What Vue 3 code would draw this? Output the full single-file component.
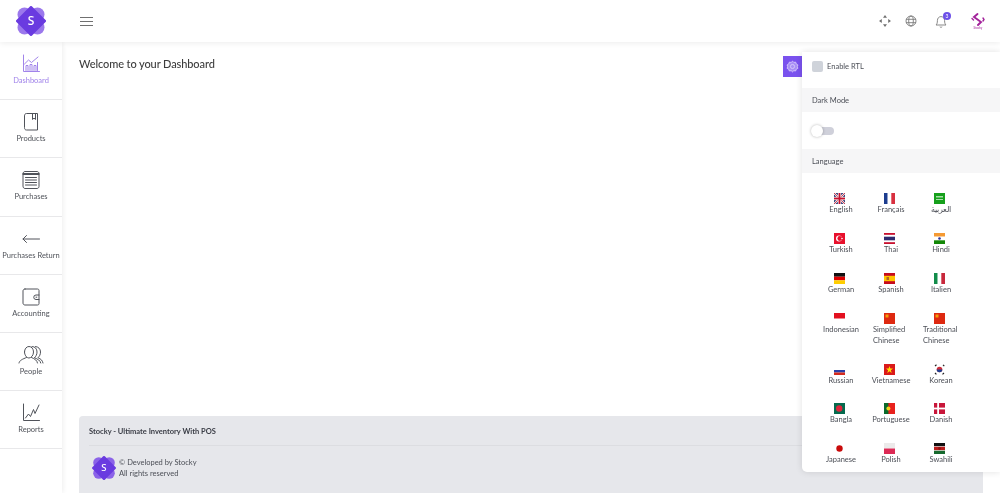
<template>
  <div class="app-shell">
    <header class="topbar">
      <div class="brand">
        <svg width="30" height="30" viewBox="0 0 30 30">
          <g fill="#9b78ec">
            <circle cx="8.500" cy="8.500" r="7" />
            <circle cx="21.500" cy="8.500" r="7" />
            <circle cx="8.500" cy="21.500" r="7" />
            <circle cx="21.500" cy="21.500" r="7" />
          </g>
          <path d="M15 1.500 L28.500 15 L15 28.500 L1.500 15 Z" fill="#6a3be0" stroke="#6a3be0" stroke-width="3" stroke-linejoin="round" />
          <text x="15" y="19" text-anchor="middle" class="logo-s">S</text>
        </svg>
      </div>
      <button class="burger"><span></span><span></span><span></span></button>
      <div class="top-actions">
        <svg width="14" height="14" viewBox="0 0 14 14" fill="#707070">
          <path d="M7 1 9 3.800H5zM7 13 5 10.200h4zM1 7l2.800-2v4zM13 7l-2.800 2V5z" />
        </svg>
        <svg width="14" height="14" viewBox="0 0 14 14" fill="none" stroke="#7a7a7a" stroke-width=".9">
          <circle cx="7" cy="7" r="5" />
          <ellipse cx="7" cy="7" rx="2.300" ry="5" />
          <path d="M2 5.300h10M2 8.700h10" />
        </svg>
        <div class="bell">
          <svg width="14" height="16" viewBox="0 0 14 16" fill="none" stroke="#7a7a7a" stroke-width=".9">
            <path d="M2 12c1-1 1.400-2 1.400-4.400C3.400 5.200 5 3.600 7 3.600s3.600 1.600 3.600 4c0 2.400.4 3.400 1.400 4.400zM5.800 13.800c.6.600 1.800.600 2.400 0" />
          </svg>
          <span class="badge">3</span>
        </div>
        <div class="avatar">
          <svg width="14" height="13" viewBox="0 0 14 13" fill="none" stroke="#a3239b" stroke-width="1.900" stroke-linecap="round">
            <path d="M6.500 1 3 4l3.500 2.500L10 9l-3 3" />
            <path d="M1 5.500 2.500 7M12 5l1 1.500-1 1.500" stroke-width="1.400" />
          </svg>
          <span class="avatar-name">Stocky</span>
        </div>
      </div>
    </header>

    <div class="layout">
      <nav class="sidebar">
        <a v-for="item in navItems" :key="item.label" class="nav-item" :class="{ active: item.active }">
          <svg width="20" height="20" viewBox="0 0 20 20" fill="none" stroke="currentColor" stroke-width="1" stroke-linecap="round" stroke-linejoin="round">
            <path v-for="d in item.paths" :key="d" :d="d" />
          </svg>
          <span>{{ item.label }}</span>
        </a>
      </nav>

      <main class="content">
        <h1>Welcome to your Dashboard</h1>
        <footer class="page-footer">
          <div class="footer-title">Stocky - Ultimate Inventory With POS</div>
          <div class="footer-row">
            <svg width="24" height="24" viewBox="0 0 30 30">
              <g fill="#8b63e8">
                <circle cx="8.500" cy="8.500" r="7" />
                <circle cx="21.500" cy="8.500" r="7" />
                <circle cx="8.500" cy="21.500" r="7" />
                <circle cx="21.500" cy="21.500" r="7" />
              </g>
              <path d="M15 1.500 L28.500 15 L15 28.500 L1.500 15 Z" fill="#6a3be0" stroke="#6a3be0" stroke-width="3" stroke-linejoin="round" />
              <text x="15" y="19" text-anchor="middle" class="logo-s">S</text>
            </svg>
            <div class="copyright">
              <div>© Developed by Stocky</div>
              <div>All rights reserved</div>
            </div>
          </div>
        </footer>
      </main>
    </div>

    <div class="customizer">
      <button class="gear">
        <svg width="13" height="13" viewBox="0 0 14 14" fill="#a88ff5" stroke="#d6c8fb" stroke-width="1">
          <path d="M7 1.200 8.400 2.600 10.400 2.300 11 4.200 12.800 5.300 12.200 7.200 12.800 9 11 10 10.400 11.800 8.400 11.500 7 12.800 5.600 11.500 3.600 11.800 3 10 1.200 9 1.800 7.200 1.200 5.300 3 4.200 3.600 2.300 5.600 2.600Z" stroke-linejoin="round" />
          <circle cx="7" cy="7" r="2.200" />
        </svg>
      </button>
      <div class="panel">
        <label class="rtl-row"><span class="check"></span>Enable RTL</label>
        <div class="section-title">Dark Mode</div>
        <div class="toggle-row">
          <span class="toggle"><span class="knob"></span></span>
        </div>
        <div class="section-title">Language</div>
        <div class="languages">
          <div v-for="lang in languages" :key="lang.name" class="language">
            <svg width="11" height="11" viewBox="0 0 11 11">
              <component :is="s[0]" v-for="(s, i) in lang.flag" :key="i" v-bind="s[1]" />
            </svg>
            <span>{{ lang.name }}</span>
          </div>
        </div>
      </div>
    </div>
  </div>
</template>

<script setup>
const navItems = [
  { label: 'Dashboard', active: true, paths: ['M2.500 1v16.500h16', 'M5 16.500v-5h2v5M9 16.500v-6h2v6M13 16.500v-5h2v5M16.500 16.500v-8', 'M3.500 10 7.500 6l3 2.500L17 3'] },
  { label: 'Products', paths: ['M3.500 3.500c0-1 .7-2 2-2h11v16.500h-11c-1.300 0-2-.8-2-2z', 'M11.500 1.500v6l1.500-1.400 1.500 1.400v-6'] },
  { label: 'Purchases', paths: ['M2 3.500c0-1 .8-2 2-2h12c1.200 0 2 1 2 2v13c0 1-.8 2-2 2H4c-1.200 0-2-1-2-2z', 'M2 3.500h16M2 4.500h16', 'M4.500 7.500h11M4.500 10h11M4.500 12.500h11M4.500 15h11'] },
  { label: 'Purchases Return', paths: ['M2 10h16.500', 'M5.500 6.500 2 10l3.500 3.500'] },
  { label: 'Accounting', paths: ['M4 2h12.500c1 0 1.500.7 1.500 1.500v13c0 1-.6 1.500-1.500 1.500H4c-1.200 0-2-.8-2-2V4c0-1.200.8-2 2-2z', 'M18 8h-3a2.200 2.200 0 0 0 0 4.500h3', 'M15 10.200h.8'] },
  { label: 'People', paths: ['M3.500 7c0-3.200 2-5.500 4.500-5.500s4.500 2.300 4.500 5.500-2.200 6-4.500 6-4.500-2.800-4.500-6z', 'M11 1.500c3.200 0 5 2.400 5 5.500 0 2.400-1 4.500-2.500 5.800', 'M14.500 1.500c3 .3 5 2.400 5 5.500 0 2.400-1 4.400-2.400 5.600', 'M-2 18c.5-2.800 3.500-3.800 7.500-5.500M10.500 12.500c3.500 1.500 5.500 2.800 6 5.500M14 13c2.600 1 5.300 2.400 5.800 5M17.500 13c2.200.8 4 2.300 4.500 5'] },
  { label: 'Reports', paths: ['M2.500 1v16.500h16', 'M4.500 15l3-4 2 2.500 3-7 1.500 4L18 2'] }
]

const rect = (x, y, width, height, fill) => ['rect', { x, y, width, height, fill }]
const circle = (cx, cy, r, fill) => ['circle', { cx, cy, r, fill }]
const stripesV = (a, b, c) => [rect(0, 0, 3.700, 11, a), rect(3.700, 0, 3.600, 11, b), rect(7.300, 0, 3.700, 11, c)]
const stripesH = (a, b, c) => [rect(0, 0, 11, 3.700, a), rect(0, 3.700, 11, 3.600, b), rect(0, 7.300, 11, 3.700, c)]
const china = [rect(0, 0, 11, 11, '#de2910'), rect(1.500, 1.500, 3, 3, '#f4a20d')]

const languages = [
  {
    name: 'English',
    flag: [
      rect(0, 0, 11, 11, '#1f2a6b'),
      ['path', { d: 'M0 0 11 11M11 0 0 11', stroke: '#eee', 'stroke-width': 2.200 }],
      ['path', { d: 'M0 0 11 11M11 0 0 11', stroke: '#c8102e', 'stroke-width': 0.800 }],
      rect(0, 3.800, 11, 3.400, '#eee'),
      rect(3.800, 0, 3.400, 11, '#eee'),
      rect(0, 4.600, 11, 1.800, '#c8102e'),
      rect(4.600, 0, 1.800, 11, '#c8102e')
    ]
  },
  { name: 'Français', flag: stripesV('#1c3c8f', '#ffffff', '#d8303f') },
  { name: 'العربية', flag: [rect(0, 0, 11, 11, '#16a01c'), rect(2, 3, 7, 1.500, '#a9dfaa'), rect(2, 6, 7, 1, '#a9dfaa')] },
  { name: 'Turkish', flag: [rect(0, 0, 11, 11, '#e8112d'), circle(5, 5.500, 3, '#fff'), circle(5.800, 5.500, 2.400, '#e8112d'), circle(8, 5.500, .8, '#fff')] },
  { name: 'Thai', flag: [rect(0, 0, 11, 11, '#fff'), rect(0, 0, 11, 1.800, '#c8102e'), rect(0, 9.200, 11, 1.800, '#c8102e'), rect(0, 3.700, 11, 3.600, '#2d2a6e')] },
  { name: 'Hindi', flag: [...stripesH('#f59a33', '#ffffff', '#138808'), circle(5.500, 5.500, 1.300, '#26309a')] },
  { name: 'German', flag: stripesH('#111111', '#dd0000', '#ffce00') },
  { name: 'Spanish', flag: [rect(0, 0, 11, 11, '#c60b1e'), rect(0, 2.800, 11, 5.400, '#ffc400'), rect(2.500, 4, 2.500, 3, '#b5651d')] },
  { name: 'Italien', flag: stripesV('#128c4a', '#ffffff', '#c8283c') },
  { name: 'Indonesian', flag: [rect(0, 0, 11, 5.500, '#e3101f')] },
  { name: 'Simplified Chinese', flag: china },
  { name: 'Traditional Chinese', flag: china },
  { name: 'Russian', flag: [rect(0, 3.500, 11, 2.500, '#fff'), rect(0, 6, 11, 2.500, '#2a3fa8'), rect(0, 8.500, 11, 2.500, '#d52b1e')] },
  { name: 'Vietnamese', flag: [rect(0, 0, 11, 11, '#da1a1a'), ['polygon', { points: '5.500,2 6.400,4.600 9,4.600 6.900,6.300 7.700,9 5.500,7.300 3.300,9 4.100,6.300 2,4.600 4.600,4.600', fill: '#ffe000' }]] },
  {
    name: 'Korean',
    flag: [
      circle(5.500, 5.500, 2.800, '#cd2e3a'),
      ['path', { d: 'M2.700 5.500a2.800 2.800 0 0 0 5.600 0z', fill: '#1f3f8f' }],
      ['path', { d: 'M1 2 2.500 .8M9 .8l1.300 1.300M1 9l1.400 1.400M8.500 10.400 10 9', stroke: '#222', 'stroke-width': 1.200 }]
    ]
  },
  { name: 'Bangla', flag: [rect(0, 0, 11, 11, '#056a4e'), circle(5.200, 5.500, 3.200, '#e0243c')] },
  { name: 'Portuguese', flag: [rect(0, 0, 11, 11, '#e8211d'), rect(0, 0, 4.400, 11, '#0a6a2c'), circle(4.400, 5.500, 2, '#f4d21f')] },
  { name: 'Danish', flag: [rect(0, 0, 11, 11, '#c8163a'), rect(3.200, 0, 1.800, 11, '#fff'), rect(0, 4.600, 11, 1.800, '#fff')] },
  { name: 'Japanese', flag: [circle(5.500, 5.500, 3.200, '#c90a0a')] },
  { name: 'Polish', flag: [rect(0, 0, 11, 5.500, '#eceaea'), rect(0, 5.500, 11, 5.500, '#dc2a55')] },
  {
    name: 'Swahili',
    flag: [rect(0, 0, 11, 3.500, '#111'), rect(0, 3.500, 11, 4, '#b91c1c'), rect(0, 7.500, 11, 3.500, '#16692e'), rect(0, 3.300, 11, .5, '#fff'), rect(0, 7.300, 11, .5, '#fff'), circle(5.500, 5.500, 1.400, '#8c1414')]
  }
]
</script>

<style>
html,
body {
  margin: 0;
  height: 100%;
  overflow: hidden;
  background: #fff;
}
</style>

<style scoped>
.app-shell {
  position: relative;
  height: 493px;
  display: flex;
  flex-direction: column;
  overflow: hidden;
  font-family: Lato, "Noto Sans", sans-serif;
  color: #444;
  filter: blur(0.3px);
}

.topbar {
  height: 42px;
  flex: none;
  display: flex;
  align-items: center;
  background: #fff;
  box-shadow: 0 1px 6px rgba(0, 0, 0, 0.08);
  position: relative;
  z-index: 2;
}

.brand {
  width: 62px;
  display: flex;
  justify-content: center;
}

.logo-s {
  font: 500 12px "Noto Sans", sans-serif;
  fill: #fff;
}

.burger {
  margin-left: 18px;
  width: 13px;
  padding: 0;
  border: 0;
  background: none;
  display: flex;
  flex-direction: column;
  gap: 3px;
}

.burger span {
  height: 1px;
  background: #707070;
}

.top-actions {
  margin-left: auto;
  margin-right: 15px;
  display: flex;
  align-items: center;
  gap: 12px;
}

.bell {
  position: relative;
  margin-left: 4px;
  display: flex;
}

.badge {
  position: absolute;
  top: -1px;
  right: -3px;
  width: 8px;
  height: 8px;
  border-radius: 50%;
  background: #6d50e8;
  color: #fff;
  font-size: 5px;
  line-height: 8px;
  text-align: center;
}

.avatar {
  width: 14px;
  margin-left: 11px;
  display: flex;
  flex-direction: column;
  align-items: center;
}

.avatar-name {
  font-size: 3px;
  line-height: 4px;
  color: #a3239b;
}

.layout {
  flex: 1;
  display: flex;
  min-height: 0;
}

.sidebar {
  width: 62px;
  flex: none;
  background: #fff;
  box-shadow: 1px 0 5px rgba(0, 0, 0, 0.07);
}

.nav-item {
  height: 57.200px;
  box-sizing: content-box;
  border-bottom: 1px solid #e8e8ea;
  display: flex;
  flex-direction: column;
  align-items: center;
  gap: 2px;
  font-size: 7.500px;
  color: #50535a;
}

.nav-item svg {
  margin-top: 12px;
  overflow: visible;
}

.nav-item span {
  white-space: nowrap;
}

.nav-item.active {
  color: #a184ea;
}

.content {
  flex: 1;
  min-width: 0;
  padding: 15px 17px 0;
  display: flex;
  flex-direction: column;
}

h1 {
  margin: 0;
  font-size: 11px;
  line-height: 14px;
  font-weight: 500;
  letter-spacing: -0.1px;
  color: #3d3d3d;
}

.page-footer {
  margin-top: auto;
  height: 77px;
  box-sizing: border-box;
  background: #e6e7eb;
  border-radius: 4px 4px 0 0;
  padding: 0 10px;
}

.footer-title {
  height: 29px;
  line-height: 31px;
  border-bottom: 1px solid #dcdde1;
  font-size: 7.500px;
  font-weight: 700;
  color: #3a3d46;
}

.footer-row {
  display: flex;
  align-items: center;
  gap: 3px;
  margin: 10px 3px 0;
}

.copyright {
  font-size: 7.500px;
  line-height: 11px;
  color: #4c4f57;
}

.customizer {
  position: absolute;
  top: 52px;
  right: 0;
  width: 217px;
  display: flex;
  align-items: flex-start;
  z-index: 3;
}

.gear {
  margin-top: 4px;
  width: 19px;
  height: 21px;
  flex: none;
  padding: 0;
  border: 0;
  background: #7a52ee;
  display: flex;
  align-items: center;
  justify-content: center;
}

.panel {
  flex: 1;
  height: 420px;
  background: #fff;
  border-radius: 0 0 0 5px;
  box-shadow: 0 0 7px rgba(0, 0, 0, 0.12);
  font-size: 7.500px;
  color: #4c4f57;
}

.rtl-row {
  height: 36px;
  padding-left: 10px;
  padding-bottom: 7px;
  display: flex;
  align-items: center;
  gap: 4px;
  box-sizing: border-box;
}

.check {
  width: 11px;
  height: 11px;
  border-radius: 2px;
  background: #cfd3da;
}

.section-title {
  height: 24px;
  line-height: 25px;
  padding-left: 10px;
  background: #f6f6f7;
}

.toggle-row {
  height: 37px;
  padding-left: 9px;
  display: flex;
  align-items: center;
}

.toggle {
  position: relative;
  width: 23px;
  height: 8px;
  display: block;
}

.toggle::before {
  content: "";
  position: absolute;
  left: 8px;
  right: 0;
  top: 0;
  height: 8px;
  border-radius: 4px;
  background: #cfd0da;
}

.knob {
  position: absolute;
  left: 0;
  top: -2px;
  width: 12px;
  height: 12px;
  border-radius: 50%;
  background: #fff;
  box-shadow: 0 0 3px rgba(0, 0, 0, 0.3);
}

.languages {
  display: grid;
  grid-template-columns: repeat(3, 50px);
  justify-content: start;
  margin-left: 14px;
  padding-top: 20px;
  row-gap: 17.900px;
}

.language {
  display: flex;
  flex-direction: column;
  align-items: center;
  padding: 0 7px;
  line-height: 11px;
  min-width: 0;
}

.language svg {
  margin-right: 3px;
}

.language span {
  display: block;
  text-align: left;
}
</style>
